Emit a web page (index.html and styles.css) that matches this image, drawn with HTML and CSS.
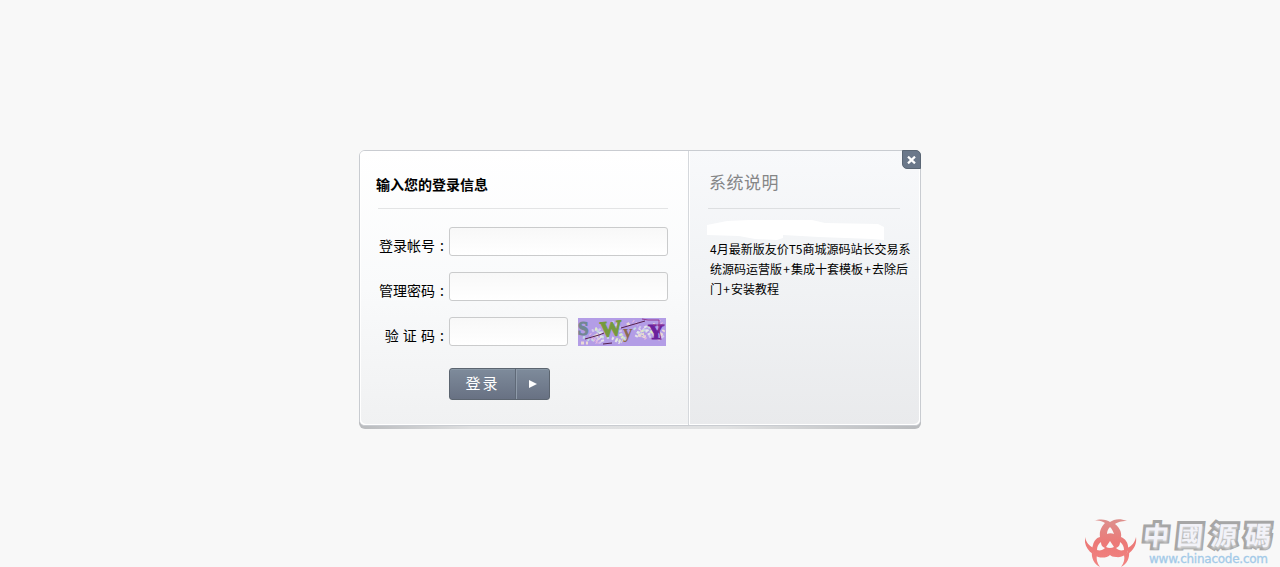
FILE: index.html
```html
<!DOCTYPE html>
<html lang="zh-CN">
<head>
    <meta charset="UTF-8">
    <title>登录</title>
    <link rel="stylesheet" href="styles.css">
</head>
<body>

<div class="login-box">
    <form class="login-form">
        <h2>输入您的登录信息</h2>
        <div class="row">
            <label for="username">登录帐号<span class="colon">:</span></label>
            <input type="text" id="username">
        </div>
        <div class="row">
            <label for="password">管理密码<span class="colon">:</span></label>
            <input type="password" id="password">
        </div>
        <div class="row">
            <label for="code" class="spaced">验 证 码<span class="colon">:</span></label>
            <input type="text" id="code" class="short">
            <svg class="captcha" width="88" height="28" viewBox="0 0 88 28">
                <rect width="88" height="28" fill="#b39de6"/>
                <g fill="none" stroke-width="3">
                    <path d="M14 13l6-3 5 6-7 4 5 5M34 4l7 5 4 11M61 9l7 4 4-6M71 19l9-5 6 6" stroke="#d3c9ee" stroke-dasharray="2 2"/>
                    <path d="M5 19l9 4 7-11 4 7 10 1M39 12l8 9M56 10l6 7 9-8 4 8" stroke="#c2d9e2" stroke-dasharray="2 3"/>
                    <path d="M3 25h7m8-9l4 5M49 7l4-3M60 17l8 2m4-9l5-4M80 22l6-10" stroke="#e9d9d6" stroke-dasharray="3 2"/>
                    <path d="M17 11l3 1m22 4l5 7M64 12l1 7M73 15l3-3M38 21l6 3" stroke="#dcecc5" stroke-dasharray="2 1"/>
                    <path d="M12 16l9 9M55 3l5 4M81 3l4 4M14 20l6 6M62 13l6 8" stroke="#e6b8e2" stroke-dasharray="1 2"/>
                    <path d="M22 14l3 10M34 20l8 5M58 19l4-8M67 8l5 10" stroke="#e4e4ea" stroke-dasharray="2 2"/>
                </g>
                <text class="cap" x="0" y="17" font-size="19" fill="#718793" stroke="#718793">S</text>
                <text class="cap" x="23" y="19" font-size="22" fill="#759a3c" stroke="#759a3c" transform="rotate(-6 24 19)">W</text>
                <text class="cap" x="45" y="20" font-size="19" fill="#8b6b50">y</text>
                <text class="cap" x="70" y="21" font-size="22" fill="#6b219c" stroke="#6b219c">Y</text>
                <path d="M7 21l14-4 5-2M43 10l24-7M25 26l9-1" fill="none" stroke="#56204e"/>
                <path d="M64 1l6 1h11v10l2 10M75 7h12" fill="none" stroke="#943994"/>
            </svg>
        </div>
        <button type="button" class="btn">
            <span class="btn-text">登录</span>
            <span class="btn-arrow"><svg width="8" height="8" viewBox="0 0 8 8"><path d="M0 0l8 4-8 4z" fill="#fff"/></svg></span>
        </button>
    </form>
    <div class="info">
        <a href="#" class="close"><svg width="9" height="8" viewBox="0 0 9 8"><path d="M1 .6l7 6.8M8 .6L1 7.4" stroke="#fff" stroke-width="2.2"/></svg></a>
        <h3>系统说明</h3>
        <svg class="smudge" width="178" height="21" viewBox="0 0 178 21"><path d="M0 5L10 3 20 1 42 0H105L118 3 171 4 177 7V20L165 19 112 17 76 15V18L70 20 48 19 32 16 0 15z" fill="#fff"/></svg>
        <p>4月最新版友价T5商城源码站长交易系<br>统源码运营版<span class="plus">+</span>集成十套模板<span class="plus">+</span>去除后<br>门<span class="plus">+</span>安装教程</p>
    </div>
</div>
<div class="box-bottom"></div>

<div class="watermark">
    <svg class="mark" width="52" height="48" viewBox="0 0 52 48">
        <defs>
            <linearGradient id="red" gradientUnits="userSpaceOnUse" x1="0" y1="0" x2="0" y2="48">
                <stop offset="0" stop-color="#dd908d"/>
                <stop offset=".5" stop-color="#ec7977"/>
                <stop offset="1" stop-color="#f28583"/>
            </linearGradient>
        </defs>
        <g fill="url(#red)">
            <path d="M9 2C16-1 22 1 25 3 29 0 35-1 42 2 36 2 33 3 30 5 34 8 37 13 36 18 41 20 44 25 43 31 43 35 37 39 31 38 28 38 26 37 25 36 22 39 17 39 13 38 8 36 6 31 8 26 9 22 11 19 15 18 14 12 17 7 20 4 17 2 13 1 9 2z"/>
            <path d="M0 18C1 23 4 27 9 29L8 35C2 31-1 25 0 18zM51 18C50 23 47 27 42 29L43 35C49 31 52 25 51 18z"/>
            <path d="M7 32C6 39 9 45 15 48 12 44 11 40 12 36zM44 32C45 39 42 45 36 48 39 44 40 40 39 36z"/>
        </g>
        <path fill="#f8f8f8" d="M25 8C23 10 22 12 22 15 24 14 27 14 29 15 28 12 27 10 25 8zM25 22L21 28Q25 30 29 28zM16 23C13 25 12 28 12 31 15 32 18 31 20 29 17 28 16 26 16 23zM35 23C35 26 34 28 31 29 33 31 36 32 39 31 39 28 38 25 35 23z"/>
    </svg>
    <div class="mark-text">
        <span class="mark-name" lang="zh-TW">中國源碼</span>
        <span class="mark-url">www.chinacode.com</span>
    </div>
</div>

</body>
</html>
```
FILE: styles.css
```css
* {
    box-sizing: border-box;
}
body {
    margin: 0;
    height: 567px;
    padding-top: 150px;
    background: #f8f8f8;
    font-family: "Noto Sans CJK SC", sans-serif;
    font-size: 14px;
    color: #000;
    overflow: hidden;
    position: relative;
}
.login-box {
    display: flex;
    position: relative;
    z-index: 1;
    width: 562px;
    height: 276px;
    margin: 0 auto;
    border: 1px solid #c9ccd1;
    border-radius: 6px;
    background: #fff;
}
.box-bottom {
    width: 562px;
    height: 11px;
    margin: -8px auto 0;
    border-radius: 0 0 6px 6px;
    background: linear-gradient(90deg, #b9bbbe, #dfe0e1 20%, #e0e1e2 65%, #b9bbbe);
}
.login-form {
    width: 329px;
    padding: 22px 20px 0 16px;
    border-right: 1px solid #d5d8dc;
    border-radius: 5px 0 0 5px;
    background: linear-gradient(#fff, #f9fafb 50%, #f0f1f2);
    box-shadow: inset 1px -1px 0 #fff;
}
.login-form h2 {
    margin: 0 0 18px 2px;
    height: 36px;
    line-height: 22px;
    border-bottom: 1px solid #e3e4e5;
    font-size: 14px;
    font-weight: bold;
    text-indent: -2px;
}
.row {
    display: flex;
    height: 29px;
    margin-bottom: 16px;
}
.row label {
    width: 73px;
    padding-top: 7px;
    line-height: 22px;
    text-align: right;
    white-space: nowrap;
}
.row label.spaced {
    word-spacing: 1px;
}
.colon {
    display: inline-block;
    width: 14px;
    text-align: center;
}
.row input {
    width: 219px;
    height: 29px;
    padding: 0 6px;
    border: 1px solid #cacbcc;
    border-radius: 3px;
    background: linear-gradient(#f8f8f8, #fff);
    outline: none;
}
.row input.short {
    width: 119px;
}
.captcha {
    margin: 1px 0 0 10px;
}
.cap {
    font-family: "Liberation Serif", serif;
    font-weight: bold;
}
.btn {
    display: flex;
    width: 101px;
    height: 32px;
    margin: 22px 0 0 73px;
    padding: 0;
    border: 1px solid #5c6570;
    border-radius: 3px;
    background: linear-gradient(#7e8b9b, #687183);
    box-shadow: inset 0 1px 0 #8998a6;
    color: #fff;
    font-family: inherit;
}
.btn-text {
    width: 66px;
    height: 30px;
    border-right: 1px solid #5f6977;
    box-shadow: 1px 0 0 #8f9baa;
    font-size: 15px;
    line-height: 28px;
    letter-spacing: 2px;
}
.btn-arrow {
    display: flex;
    width: 33px;
    height: 30px;
    align-items: center;
    justify-content: center;
}
.info {
    position: relative;
    width: 231px;
    padding: 19px 8px 0 19px;
    border-radius: 0 5px 5px 0;
    background: linear-gradient(#f8f9fb, #f1f3f5 45%, #e9eaec);
    box-shadow: inset -1px -1px 0 #fff, inset 1px 0 0 #fff;
}
.info h3 {
    width: 192px;
    height: 39px;
    margin: 0;
    padding-left: 1px;
    border-bottom: 1px solid #dddfe1;
    color: #858687;
    font-size: 17px;
    font-weight: normal;
    line-height: 23px;
    letter-spacing: .5px;
}
.smudge {
    display: block;
    margin: 11px 0 0 -1px;
}
.info p {
    margin: -2px 0 0 2px;
    font-size: 12px;
    line-height: 20px;
    white-space: nowrap;
}
.plus {
    display: inline-block;
    width: 9px;
    text-align: center;
}
.close {
    position: absolute;
    top: -1px;
    right: -1px;
    display: flex;
    align-items: center;
    justify-content: center;
    width: 19px;
    height: 19px;
    border: 1px solid #5a6674;
    border-radius: 0 5px 0 5px;
    background: #6b788a;
}
.watermark {
    position: absolute;
    right: 0;
    bottom: 0;
    display: flex;
    width: 195px;
    height: 48px;
}
.mark-text {
    width: 143px;
    padding-left: 6px;
}
.mark-name {
    display: block;
    height: 32px;
    font-family: "Noto Sans CJK TC", sans-serif;
    font-size: 26px;
    font-weight: bold;
    line-height: 30px;
    letter-spacing: 8px;
    white-space: nowrap;
    color: #f2f2f8;
    -webkit-text-stroke: 6px #a6a6a6;
    paint-order: stroke fill;
    stroke-linejoin: round;
    text-shadow: 1px 2px 2px #d0d0d0;
    transform: skewX(-6deg);
}
.mark-url {
    display: block;
    margin-left: 6px;
    font-family: "DejaVu Sans", sans-serif;
    font-size: 12px;
    line-height: 17px;
    letter-spacing: -.25px;
    color: #a3cae8;
    -webkit-text-stroke: .3px #a3cae8;
}
```
